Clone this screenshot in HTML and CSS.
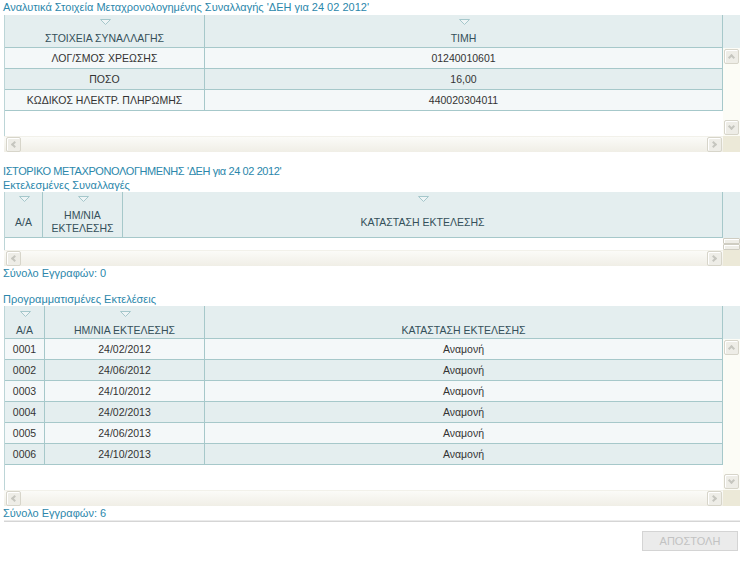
FILE: index.html
```html
<!DOCTYPE html>
<html lang="el">
<head>
<meta charset="utf-8">
<title>Μεταχρονολογημένη Συναλλαγή</title>
<link rel="stylesheet" href="styles.css">
</head>
<body>
<div class="page">
  <div class="label title1">Αναλυτικά Στοιχεία Μεταχρονολογημένης Συναλλαγής 'ΔΕΗ για 24 02 2012'</div>

  <div class="grid g1">
    <div class="grid-top">
      <div class="grid-body">
        <div class="row head">
          <div class="hcell"><svg class="sort" width="11" height="6" viewBox="0 0 11 6"><path d="M0.5 0.5H10.5L5.5 5.5Z" fill="#eef4f5" stroke="#a5c7cb"/></svg><div class="htext">ΣΤΟΙΧΕΙΑ ΣΥΝΑΛΛΑΓΗΣ</div></div>
          <div class="hcell"><svg class="sort" width="11" height="6" viewBox="0 0 11 6"><path d="M0.5 0.5H10.5L5.5 5.5Z" fill="#eef4f5" stroke="#a5c7cb"/></svg><div class="htext">ΤΙΜΗ</div></div>
        </div>
        <div class="row odd"><div class="cell">ΛΟΓ/ΣΜΟΣ ΧΡΕΩΣΗΣ</div><div class="cell">01240010601</div></div>
        <div class="row even"><div class="cell">ΠΟΣΟ</div><div class="cell">16,00</div></div>
        <div class="row odd"><div class="cell">ΚΩΔΙΚΟΣ ΗΛΕΚΤΡ. ΠΛΗΡΩΜΗΣ</div><div class="cell">440020304011</div></div>
        <div class="filler"></div>
      </div>
      <div class="vscroll">
        <div class="vs-head"></div>
        <div class="vs-track">
          <span class="sbtn"><span class="chev up"></span></span>
          <span class="sbtn"><span class="chev down"></span></span>
        </div>
      </div>
    </div>
    <div class="hscroll">
      <div class="hs-track">
        <span class="sbtn"><span class="chev left"></span></span>
        <span class="sbtn"><span class="chev right"></span></span>
      </div>
      <div class="corner"></div>
    </div>
  </div>

  <div class="label gap caps">ΙΣΤΟΡΙΚΟ ΜΕΤΑΧΡΟΝΟΛΟΓΗΜΕΝΗΣ 'ΔΕΗ για 24 02 2012'</div>
  <div class="label">Εκτελεσμένες Συναλλαγές</div>

  <div class="grid g2">
    <div class="grid-top">
      <div class="grid-body">
        <div class="row head">
          <div class="hcell"><svg class="sort" width="11" height="6" viewBox="0 0 11 6"><path d="M0.5 0.5H10.5L5.5 5.5Z" fill="#eef4f5" stroke="#a5c7cb"/></svg><div class="htext">Α/Α</div></div>
          <div class="hcell"><svg class="sort" width="11" height="6" viewBox="0 0 11 6"><path d="M0.5 0.5H10.5L5.5 5.5Z" fill="#eef4f5" stroke="#a5c7cb"/></svg><div class="htext">ΗΜ/ΝΙΑ<br>ΕΚΤΕΛΕΣΗΣ</div></div>
          <div class="hcell"><svg class="sort" width="11" height="6" viewBox="0 0 11 6"><path d="M0.5 0.5H10.5L5.5 5.5Z" fill="#eef4f5" stroke="#a5c7cb"/></svg><div class="htext">ΚΑΤΑΣΤΑΣΗ ΕΚΤΕΛΕΣΗΣ</div></div>
        </div>
        <div class="filler"></div>
      </div>
      <div class="vscroll">
        <div class="vs-head"></div>
        <div class="vs-mini">
          <span class="mini"></span>
          <span class="mini"></span>
        </div>
      </div>
    </div>
    <div class="hscroll">
      <div class="hs-track">
        <span class="sbtn"><span class="chev left"></span></span>
        <span class="sbtn"><span class="chev right"></span></span>
      </div>
      <div class="corner"></div>
    </div>
  </div>
  <div class="label">Σύνολο Εγγραφών: 0</div>

  <div class="label gap">Προγραμματισμένες Εκτελέσεις</div>
  <div class="grid g3">
    <div class="grid-top">
      <div class="grid-body">
        <div class="row head">
          <div class="hcell"><svg class="sort" width="11" height="6" viewBox="0 0 11 6"><path d="M0.5 0.5H10.5L5.5 5.5Z" fill="#eef4f5" stroke="#a5c7cb"/></svg><div class="htext">Α/Α</div></div>
          <div class="hcell"><svg class="sort" width="11" height="6" viewBox="0 0 11 6"><path d="M0.5 0.5H10.5L5.5 5.5Z" fill="#eef4f5" stroke="#a5c7cb"/></svg><div class="htext">ΗΜ/ΝΙΑ ΕΚΤΕΛΕΣΗΣ</div></div>
          <div class="hcell"><div class="sort-space"></div><div class="htext">ΚΑΤΑΣΤΑΣΗ ΕΚΤΕΛΕΣΗΣ</div></div>
        </div>
        <div class="row odd"><div class="cell">0001</div><div class="cell">24/02/2012</div><div class="cell">Αναμονή</div></div>
        <div class="row even"><div class="cell">0002</div><div class="cell">24/06/2012</div><div class="cell">Αναμονή</div></div>
        <div class="row odd"><div class="cell">0003</div><div class="cell">24/10/2012</div><div class="cell">Αναμονή</div></div>
        <div class="row even"><div class="cell">0004</div><div class="cell">24/02/2013</div><div class="cell">Αναμονή</div></div>
        <div class="row odd"><div class="cell">0005</div><div class="cell">24/06/2013</div><div class="cell">Αναμονή</div></div>
        <div class="row even"><div class="cell">0006</div><div class="cell">24/10/2013</div><div class="cell">Αναμονή</div></div>
        <div class="filler"></div>
      </div>
      <div class="vscroll">
        <div class="vs-head"></div>
        <div class="vs-track">
          <span class="sbtn"><span class="chev up"></span></span>
          <span class="sbtn"><span class="chev down"></span></span>
        </div>
      </div>
    </div>
    <div class="hscroll">
      <div class="hs-track">
        <span class="sbtn"><span class="chev left"></span></span>
        <span class="sbtn"><span class="chev right"></span></span>
      </div>
      <div class="corner"></div>
    </div>
  </div>
  <div class="label">Σύνολο Εγγραφών: 6</div>
  <div class="rule"></div>
  <div class="actions">
    <button class="btn" type="button" disabled>ΑΠΟΣΤΟΛΗ</button>
  </div>
</div>
</body>
</html>
```

FILE: styles.css
```css
* { box-sizing: border-box; }
html, body { margin: 0; padding: 0; background: #fff; }
body { font-family: "Liberation Sans", Arial, sans-serif; }

.page { width: 744px; padding: 0 4px; }

.label {
  font-size: 11px;
  line-height: 14px;
  color: #2b87ab;
  white-space: nowrap;
  margin-left: -1px;
}
.title1 { line-height: 15px; }
.caps { letter-spacing: -0.4px; }
.gap { margin-top: 12px; }

.grid { width: 736px; }
.grid-top { display: flex; }
.grid-body {
  width: 719px;
  border-left: 1px solid #bcd5d7;
  display: flex;
  flex-direction: column;
  background: #fff;
}
.g1 .grid-body { height: 121px; }
.g2 .grid-body { height: 58px; }
.g3 .grid-body { height: 184px; }

.row {
  display: grid;
  border-bottom: 1px solid #a6c8ca;
  flex-shrink: 0;
}
.g1 .row { grid-template-columns: 200px 518px; }
.g2 .row { grid-template-columns: 38px 80px 600px; }
.g3 .row { grid-template-columns: 40px 160px 518px; }

.head { background: #e4eeef; height: 33px; }
.g2 .head { height: 46px; }
.odd { background: #f4f8f9; height: 21px; }
.even { background: #e4eeef; height: 21px; }

.hcell, .cell { border-right: 1px solid #a6c8ca; }

.hcell {
  display: flex;
  flex-direction: column;
  align-items: center;
  padding-top: 4px;
}
.g3 .hcell { padding-top: 5px; }
.sort { display: block; flex-shrink: 0; margin-left: 2px; }
.sort-space { height: 6px; flex-shrink: 0; }
.htext {
  flex: 1;
  display: flex;
  align-items: center;
  justify-content: center;
  text-align: center;
  font-size: 10.5px;
  line-height: 13px;
  color: #34505a;
  padding-top: 5px;
}
.g3 .htext { padding-top: 6px; }

.cell {
  display: flex;
  align-items: center;
  justify-content: center;
  font-size: 10.5px;
  line-height: 20px;
  color: #333;
  white-space: nowrap;
}

.filler { flex: 1; background: #fff; }

.vscroll {
  width: 17px;
  display: flex;
  flex-direction: column;
}
.vs-head { height: 33px; background: #e4eeef; flex-shrink: 0; }
.g2 .vs-head { height: 46px; }
.vs-track {
  flex: 1;
  background: #fcfcf6;
  display: flex;
  flex-direction: column;
  justify-content: space-between;
  padding: 1px;
}
.vs-mini {
  flex: 1;
  background: #fcfcf6;
  display: flex;
  flex-direction: column;
  justify-content: center;
}
.mini {
  display: block;
  height: 6px;
  border: 1px solid #cfcdc2;
  border-radius: 1px;
  background: #efeee8;
  box-shadow: inset 1px 1px 0 #fff;
}

.hscroll { display: flex; height: 16px; }
.hs-track {
  flex: 1;
  display: flex;
  justify-content: space-between;
  align-items: center;
  padding: 0 1px 0 2px;
  background: linear-gradient(#fbfbf8, #f0eee6);
  border-top: 1px solid #f2f1ea;
}
.corner { width: 17px; background: #ece9d8; }

.sbtn {
  width: 15px;
  height: 15px;
  border: 1px solid #d7d5ca;
  border-radius: 2px;
  background: #eeede7;
  box-shadow: inset 1px 1px 0 #fff;
  display: flex;
  align-items: center;
  justify-content: center;
}
.chev {
  width: 5px;
  height: 5px;
  border-style: solid;
  border-color: #c6c6bf;
  border-width: 2px 0 0 2px;
}
.chev.up { transform: translateY(1px) rotate(45deg); }
.chev.down { transform: translateY(-1px) rotate(225deg); }
.chev.left { transform: translateX(1px) rotate(-45deg); }
.chev.right { transform: translateX(-1px) rotate(135deg); }

.rule {
  height: 2px;
  border-top: 1px solid #ebebeb;
  border-bottom: 1px solid #d5d5d5;
}

.actions {
  display: flex;
  justify-content: flex-end;
  padding-right: 2px;
  margin-top: 9px;
}
.btn {
  width: 96px;
  height: 20px;
  padding: 0;
  border: 1px solid #d4d4d4;
  background: #ebebeb;
  color: #c2c2c2;
  font-family: "Liberation Sans", Arial, sans-serif;
  font-size: 11px;
  line-height: 18px;
  border-radius: 0;
}
```
